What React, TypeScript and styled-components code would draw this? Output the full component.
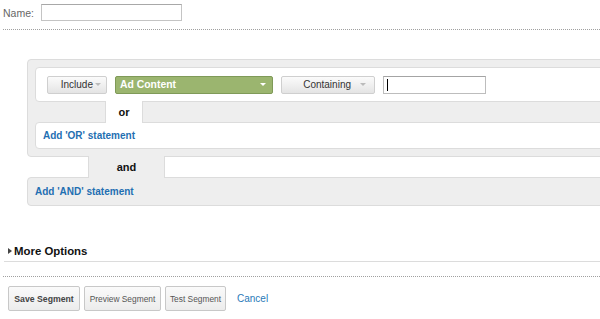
import React from 'react';
import styled, { createGlobalStyle } from 'styled-components';

const GlobalStyle = createGlobalStyle`
  html, body {
    margin: 0;
    padding: 0;
    background: #fff;
    overflow: hidden;
  }
  body {
    font-family: "Liberation Sans", Arial, sans-serif;
    color: #333;
  }
`;

const Page = styled.div`
  width: 600px;
  height: 319px;
  overflow: hidden;
`;

const NameRow = styled.div`
  display: flex;
  align-items: center;
  gap: 7px;
  padding: 4px 0 0 3px;
  height: 17px;
`;

const Label = styled.span`
  font-size: 10.5px;
  color: #666;
`;

const NameInput = styled.div`
  width: 141px;
  height: 17px;
  box-sizing: border-box;
  border: 1px solid #c4c4c4;
  border-top-color: #a8a8a8;
  background: #fff;
`;

const DottedRule = styled.div<{ $top: number }>`
  margin: ${p => p.$top}px 0 0 3px;
  border-top: 1px dotted #a0a0a0;
`;

const SolidRule = styled.div`
  margin: 2px 0 0 4px;
  border-top: 1px solid #dcdcdc;
`;

const Panel = styled.div`
  margin: 29px -20px 0 27px;
  background: #eee;
  border: 1px solid #dcdcdc;
  border-radius: 4px;
  padding: 7px;
`;

const WhiteBox = styled.div<{ $h: number }>`
  display: flex;
  align-items: center;
  box-sizing: border-box;
  height: ${p => p.$h}px;
  background: #fff;
  border: 1px solid #dcdcdc;
  border-radius: 4px;
  padding-left: 7px;
  gap: 8px;
`;

const ControlRow = styled.div`
  display: flex;
  align-items: center;
  padding-left: 4px;
`;

const Connector = styled.div`
  display: flex;
  height: 20px;
`;

const Spacer = styled.div<{ $w: number }>`
  width: ${p => p.$w}px;
`;

const Tab = styled.div<{ $w: number; $bg: string }>`
  position: relative;
  z-index: 1;
  width: ${p => p.$w}px;
  margin: -1px 0;
  box-sizing: border-box;
  background: ${p => p.$bg};
  border-left: 1px solid #dcdcdc;
  border-right: 1px solid #dcdcdc;
  display: flex;
  align-items: center;
  justify-content: center;
  font-size: 11px;
  font-weight: bold;
  color: #111;
`;

const AndRow = styled(Connector)`
  margin-left: 27px;
`;

const AndBox = styled.div`
  display: flex;
  align-items: center;
  box-sizing: border-box;
  height: 29px;
  margin: 0 -20px 0 27px;
  background: #eee;
  border: 1px solid #dcdcdc;
  border-radius: 4px;
  padding-left: 7px;
`;

const AddLink = styled.span`
  font-size: 10px;
  font-weight: bold;
  color: #1f6fb2;
`;

const Arrow = styled.span<{ $color: string }>`
  display: inline-block;
  width: 0;
  height: 0;
  border-left: 3px solid transparent;
  border-right: 3px solid transparent;
  border-top: 3px solid ${p => p.$color};
`;

const GrayButton = styled.div<{ $w: number; $gap: number; $pr: number }>`
  display: flex;
  align-items: center;
  justify-content: flex-end;
  gap: ${p => p.$gap}px;
  width: ${p => p.$w}px;
  height: 18px;
  box-sizing: border-box;
  padding-right: ${p => p.$pr}px;
  border: 1px solid #cfcfcf;
  border-radius: 2px;
  background: linear-gradient(#fbfbfb, #e4e4e4);
  font-size: 10px;
  color: #333;
  margin-right: 8px;
`;

const GreenSelect = styled.div`
  display: flex;
  align-items: center;
  justify-content: space-between;
  width: 158px;
  height: 18px;
  box-sizing: border-box;
  padding: 0 6px 0 4px;
  background: #9bb56f;
  border: 1px solid #7f9a58;
  border-radius: 2px;
  font-size: 10.4px;
  font-weight: bold;
  color: #fff;
  margin-right: 8px;
`;

const ValueInput = styled.div`
  display: flex;
  align-items: center;
  width: 103px;
  height: 18px;
  box-sizing: border-box;
  border: 1px solid #bdbdbd;
  border-top-color: #a4a4a4;
  background: #fff;
  padding-left: 3px;
`;

const Caret = styled.span`
  width: 1px;
  height: 12px;
  background: #000;
`;

const MoreRow = styled.div`
  display: flex;
  align-items: center;
  gap: 2px;
  margin-top: 37px;
  height: 16px;
  padding-left: 8px;
  font-size: 11.4px;
  font-weight: bold;
  color: #111;
`;

const Triangle = styled.span`
  width: 0;
  height: 0;
  border-top: 3px solid transparent;
  border-bottom: 3px solid transparent;
  border-left: 4px solid #444;
`;

const ButtonRow = styled.div`
  display: flex;
  align-items: center;
  gap: 4px;
  margin-top: 9px;
  padding-left: 8px;
`;

const ActionButton = styled.div<{ $w: number; $primary?: boolean }>`
  display: flex;
  align-items: center;
  justify-content: center;
  width: ${p => p.$w}px;
  height: 25px;
  box-sizing: border-box;
  border: 1px solid #c8c8c8;
  border-radius: 2px;
  background: linear-gradient(#fafafa, #ececec);
  font-size: ${p => (p.$primary ? '8.7px' : '8.4px')};
  font-weight: ${p => (p.$primary ? 'bold' : 'normal')};
  color: ${p => (p.$primary ? '#444' : '#555')};
`;

const CancelLink = styled.span`
  margin-left: 7px;
  font-size: 10px;
  color: #2a7ab8;
`;

export default function App() {
  return (
    <Page>
      <GlobalStyle />
      <NameRow>
        <Label>Name:</Label>
        <NameInput />
      </NameRow>
      <DottedRule $top={8} />

      <Panel>
        <WhiteBox $h={35}>
          <ControlRow>
            <GrayButton $w={60} $gap={2} $pr={5}>
              Include<Arrow $color="#bbb" />
            </GrayButton>
            <GreenSelect>
              Ad Content<Arrow $color="#fff" />
            </GreenSelect>
            <GrayButton $w={94} $gap={9} $pr={8}>
              Containing<Arrow $color="#bbb" />
            </GrayButton>
            <ValueInput>
              <Caret />
            </ValueInput>
          </ControlRow>
        </WhiteBox>
        <Connector>
          <Spacer $w={70} />
          <Tab $w={38} $bg="#fff">or</Tab>
        </Connector>
        <WhiteBox $h={27}>
          <AddLink>Add 'OR' statement</AddLink>
        </WhiteBox>
      </Panel>

      <AndRow>
        <Spacer $w={61} />
        <Tab $w={77} $bg="#eee">and</Tab>
      </AndRow>
      <AndBox>
        <AddLink>Add 'AND' statement</AddLink>
      </AndBox>

      <MoreRow>
        <Triangle />
        More Options
      </MoreRow>
      <SolidRule />
      <DottedRule $top={14} />

      <ButtonRow>
        <ActionButton $w={72} $primary>Save Segment</ActionButton>
        <ActionButton $w={77}>Preview Segment</ActionButton>
        <ActionButton $w={61}>Test Segment</ActionButton>
        <CancelLink>Cancel</CancelLink>
      </ButtonRow>
    </Page>
  );
}
